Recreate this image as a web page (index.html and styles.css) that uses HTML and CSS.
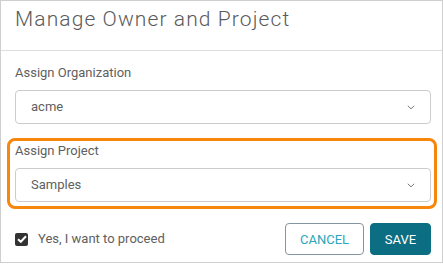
FILE: index.html
```html
<!DOCTYPE html>
<html>
<head>
<meta charset="utf-8">
<link rel="stylesheet" href="styles.css">
</head>
<body>
<div class="dialog">
  <div class="dialog-header">
    <h1 class="dialog-title">Manage Owner and Project</h1>
  </div>
  <div class="dialog-body">
    <div class="field">
      <div class="field-label">Assign Organization</div>
      <div class="select">
        <span class="select-value">acme</span>
        <svg class="chevron" width="8" height="5" viewBox="0 0 8 5"><path d="M0.8 0.8 L4 3.8 L7.2 0.8" fill="none" stroke="#777" stroke-width="1"/></svg>
      </div>
    </div>
    <div class="field highlight">
      <div class="field-label">Assign Project</div>
      <div class="select">
        <span class="select-value">Samples</span>
        <svg class="chevron" width="8" height="5" viewBox="0 0 8 5"><path d="M0.8 0.8 L4 3.8 L7.2 0.8" fill="none" stroke="#777" stroke-width="1"/></svg>
      </div>
    </div>
    <div class="footer">
      <label class="confirm">
        <span class="checkbox">
          <svg width="10" height="8" viewBox="0 0 10 8"><path d="M1 4.2 L3.8 6.8 L9 1.2" fill="none" stroke="#fff" stroke-width="2"/></svg>
        </span>
        <span class="confirm-text">Yes, I want to proceed</span>
      </label>
      <div class="actions">
        <button class="btn btn-cancel">CANCEL</button>
        <button class="btn btn-save">SAVE</button>
      </div>
    </div>
  </div>
</div>
</body>
</html>
```

FILE: styles.css
```css
html, body {
  margin: 0;
  padding: 0;
  background: #fff;
}
body {
  font-family: Roboto, "Liberation Sans", sans-serif;
  color: #606060;
}
.dialog {
  width: 443px;
  height: 263px;
  box-sizing: border-box;
  border: 1px solid #cfcfcf;
  background: #fff;
}
.dialog-header {
  height: 50px;
  box-sizing: border-box;
  padding: 6px 14px 0 14px;
  border-bottom: 1px solid #dedede;
}
.dialog-title {
  margin: 0;
  font-size: 21px;
  font-weight: 300;
  letter-spacing: 1.1px;
  line-height: 24px;
  color: #5a5a5a;
}
.dialog-body {
  padding: 12px 11px 0 14px;
}
.field-label {
  font-size: 13px;
  line-height: 20px;
  color: #606060;
}
.select {
  margin-top: 7px;
  height: 34px;
  box-sizing: border-box;
  border: 1px solid #cccccc;
  border-radius: 4px;
  display: flex;
  align-items: center;
  justify-content: space-between;
  padding: 0 15px 0 15px;
}
.select-value {
  font-size: 13px;
  line-height: 20px;
  color: #606060;
}
.chevron {
  display: block;
}
.highlight {
  margin: 14px -6px 0 -8px;
  border: 3px solid #f7860c;
  border-radius: 8px;
  padding: 0 3px 4px 5px;
}
.footer {
  margin-top: 14px;
  display: flex;
  align-items: center;
  justify-content: space-between;
}
.confirm {
  display: flex;
  align-items: center;
  gap: 10px;
}
.checkbox {
  width: 13px;
  height: 13px;
  border-radius: 2px;
  background: #333;
  display: flex;
  align-items: center;
  justify-content: center;
}
.checkbox svg {
  display: block;
}
.confirm-text {
  font-size: 13px;
  line-height: 16px;
  color: #606060;
}
.actions {
  display: flex;
  gap: 6px;
}
.btn {
  height: 32px;
  box-sizing: border-box;
  border-radius: 4px;
  font-family: Roboto, "Liberation Sans", sans-serif;
  font-size: 13px;
  padding: 0;
  cursor: pointer;
}
.btn-cancel {
  width: 79px;
  background: #fff;
  border: 1px solid #8596a3;
  color: #2ca6ba;
}
.btn-save {
  width: 61px;
  background: #0c6e82;
  border: 1px solid #0c6e82;
  color: #fff;
}
```
